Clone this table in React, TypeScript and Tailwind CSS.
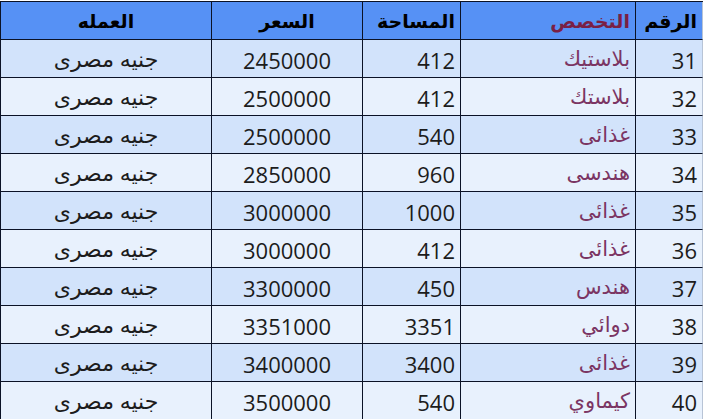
import React from 'react';

type Row = { id: number; spec: string; area: number; price: number; currency: string };

const rows: Row[] = [
  { id: 31, spec: 'بلاستيك', area: 412, price: 2450000, currency: 'جنيه مصرى' },
  { id: 32, spec: 'بلاستك', area: 412, price: 2500000, currency: 'جنيه مصرى' },
  { id: 33, spec: 'غذائى', area: 540, price: 2500000, currency: 'جنيه مصرى' },
  { id: 34, spec: 'هندسى', area: 960, price: 2850000, currency: 'جنيه مصرى' },
  { id: 35, spec: 'غذائى', area: 1000, price: 3000000, currency: 'جنيه مصرى' },
  { id: 36, spec: 'غذائى', area: 412, price: 3000000, currency: 'جنيه مصرى' },
  { id: 37, spec: 'هندس', area: 450, price: 3300000, currency: 'جنيه مصرى' },
  { id: 38, spec: 'دوائي', area: 3351, price: 3351000, currency: 'جنيه مصرى' },
  { id: 39, spec: 'غذائى', area: 3400, price: 3400000, currency: 'جنيه مصرى' },
  { id: 40, spec: 'كيماوي', area: 540, price: 3500000, currency: 'جنيه مصرى' },
];

const cols = 'grid grid-cols-[68px_175px_98px_151px_211px]';
const cell = 'border-l border-b border-[#0b1226] flex items-center px-[5px] overflow-hidden whitespace-nowrap';

export default function App() {
  return (
    <div className="w-[703px] h-[419px] overflow-hidden bg-white pt-px" style={{ fontFamily: '"Open Sans", "DejaVu Sans", sans-serif' }}>
      <div dir="rtl" className="w-[703px]">
        {/* Header */}
        <div className={`${cols} h-[39px] bg-[#5691f5] border-t border-[#0b1226] text-[19px] font-bold text-black`}>
          <div className={`${cell} justify-start border-r border-r-[#b8c4d6] h-[38px] pt-[2px]`}>الرقم</div>
          <div className={`${cell} justify-start text-[#7a1f45] h-[38px] pt-[2px]`}>التخصص</div>
          <div className={`${cell} justify-start h-[38px] pt-[2px]`}>المساحة</div>
          <div className={`${cell} justify-center h-[38px] pt-[2px]`}>السعر</div>
          <div className={`${cell} justify-center h-[38px] pt-[2px]`}>العمله</div>
        </div>

        {/* Rows */}
        {rows.map((r, i) => (
          <div
            key={r.id}
            className={`${cols} h-[38px] text-[22px] text-[#1c1c1c] ${i % 2 === 0 ? 'bg-[#d2e3fb]' : 'bg-[#e8f1fd]'}`}
          >
            <div className={`${cell} justify-start border-r border-r-[#b8c4d6] pt-[3px]`}>{r.id}</div>
            <div className={`${cell} justify-start text-[#7b3563] text-[21px]`}>{r.spec}</div>
            <div className={`${cell} justify-start pt-[3px]`}>{r.area}</div>
            <div className={`${cell} justify-center pt-[3px]`}>{r.price}</div>
            <div className={`${cell} justify-center text-[22px]`}>{r.currency}</div>
          </div>
        ))}
      </div>
    </div>
  );
}
